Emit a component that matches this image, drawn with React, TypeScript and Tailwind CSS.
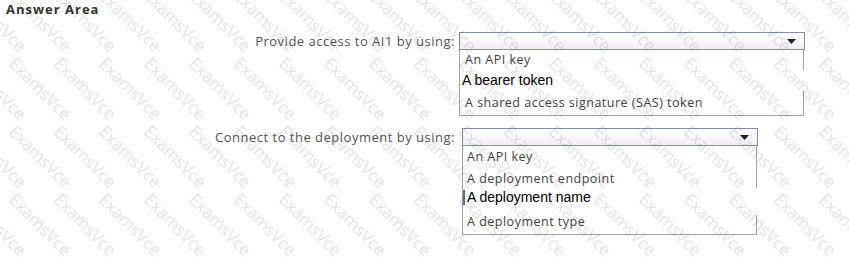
import React from 'react'

const ui = { fontFamily: '"Open Sans", "Noto Sans", sans-serif' }
const arial = { fontFamily: '"Liberation Sans", Arial, sans-serif' }

// faint diagonal "ExamsVce" stamp that sits over the whole page
function Watermark() {
  let copies: Array<[number, number]> = []
  for (let dx of [-90, -45, 0, 45]) for (let dy of [-136, -68, 0, 68]) copies.push([dx, dy])
  return (
    <svg className="pointer-events-none absolute inset-0" width="849" height="262">
      <defs>
        <pattern id="wm" x="5" y="62" width="45" height="68" patternUnits="userSpaceOnUse">
          {copies.map(([dx, dy]) => (
            <text
              key={`${dx}:${dy}`}
              x={dx + 4}
              y={dy}
              transform={`rotate(45 ${dx} ${dy})`}
              fontSize="17"
              fill="#000"
              fillOpacity="0.11"
              style={ui}
            >
              ExamsVce
            </text>
          ))}
        </pattern>
      </defs>
      <rect width="849" height="262" fill="url(#wm)" />
    </svg>
  )
}

function Caret() {
  return (
    <svg width="9" height="5" viewBox="0 0 9 5" className="fill-[#222]">
      <path d="M0 0h9L4.5 5z" />
    </svg>
  )
}

function SelectBox({ width }: { width: string }) {
  return (
    <div
      className={`flex h-[18px] items-center justify-end border border-[#7f8fb3] bg-gradient-to-b from-white to-[#f5eef4] pr-[8px] ${width}`}
    >
      <Caret />
    </div>
  )
}

export default function App() {
  return (
    <div className="relative h-[262px] w-[849px] overflow-hidden bg-white" style={ui}>
      <div className="pl-[6px] pt-[1px] text-[13px] font-bold leading-[16px] tracking-[1px] text-[#333]">
        Answer Area
      </div>

      <div className="mt-[15px] flex items-start">
        <div className="w-[455px] text-right text-[13px] leading-[18px] tracking-[0.5px] text-[#555]">
          Provide access to AI1 by using:
        </div>
        <div className="ml-[4px] w-[346px]">
          <SelectBox width="w-[346px]" />
          <div className="w-[345px] border-b border-l border-[#a3a3a3] text-[12.5px] tracking-[0.5px] text-[#444]">
            <div className="flex h-[20px] items-center border-r border-[#a3a3a3] pl-[5px]">
              An API key
            </div>
            <div
              className="flex h-[21px] items-center pl-[2px] text-[14px] tracking-normal text-black"
              style={arial}
            >
              A bearer token
            </div>
            <div className="flex h-[24px] items-center border-r border-[#a3a3a3] pl-[5px] pt-[1px]">
              A shared access signature (SAS) token
            </div>
          </div>
        </div>
      </div>

      <div className="mt-[12px] flex items-start">
        <div className="w-[455px] text-right text-[13px] leading-[18px] tracking-[0.5px] text-[#555]">
          Connect to the deployment by using:
        </div>
        <div className="ml-[7px] w-[296px]">
          <SelectBox width="w-[296px]" />
          <div className="w-[295px] border-b border-l border-[#a3a3a3] text-[12.5px] tracking-[0.5px] text-[#444]">
            <div className="flex h-[22px] items-center border-r border-[#a3a3a3] pl-[4px]">
              An API key
            </div>
            <div className="flex h-[20px] items-center border-r border-[#a3a3a3] pl-[4px] pt-[2px]">
              A deployment endpoint
            </div>
            <div className="flex h-[19px] items-center">
              <div className="mr-[2px] h-[15px] w-[2px] bg-[#55709a]" />
              <span className="text-[14px] tracking-normal text-black" style={arial}>
                A deployment name
              </span>
            </div>
            <div className="flex h-[27px] items-center pl-[4px] pt-[4px]">
              <span>A deployment type</span>
              <div className="ml-auto h-[19px] self-end border-r border-[#a3a3a3]" />
            </div>
          </div>
        </div>
      </div>

      <Watermark />
    </div>
  )
}
